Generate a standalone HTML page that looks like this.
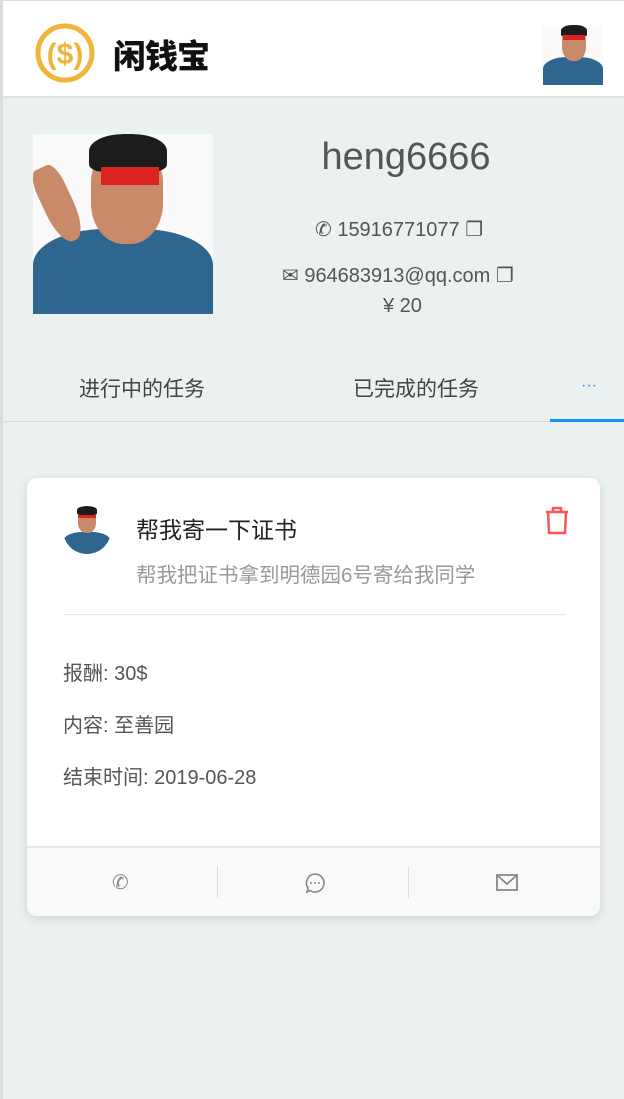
<!DOCTYPE html>
<html><head><meta charset="utf-8"><style>
*{margin:0;padding:0;box-sizing:border-box}
body{width:624px;height:1099px;background:#ebf0f0;font-family:"Liberation Sans","Noto Sans CJK SC",sans-serif;position:relative;overflow:hidden;border-left:3px solid #dcdcdc}
.hdr{position:absolute;left:0;top:0;width:621px;height:98px;background:#fff;border-top:1px solid #ddd;border-bottom:2px solid #e2e2e2}
.av{position:absolute;overflow:hidden;background:#fafafa}
.av .hair{position:absolute;background:#1c1c1c;border-radius:45% 45% 20% 20%}
.av .face{position:absolute;background:#c98a6a;border-radius:30% 30% 45% 45%}
.av .band{position:absolute;background:#d22}
.av .shirt{position:absolute;background:#2f6690;border-radius:40% 40% 0 0}
.t{position:absolute;white-space:nowrap}
</style></head><body>
<div class="hdr">
 <svg style="position:absolute;left:30px;top:20px" width="64" height="64" viewBox="0 0 64 64"><circle cx="32" cy="32" r="27" fill="none" stroke="#f0b43a" stroke-width="5"/><text x="32" y="43" text-anchor="middle" font-family="Liberation Sans" font-weight="bold" font-size="30" fill="#f0b43a">($)</text></svg>
 <div class="t" style="left:110px;top:29px;font-size:33px;font-weight:900;color:#111;font-family:'Noto Sans CJK SC',sans-serif;letter-spacing:-1px">闲钱宝</div>
 <div class="av" style="left:540px;top:24px;width:60px;height:60px">
  <div class="shirt" style="left:0;top:32px;width:60px;height:30px"></div>
  <div class="face" style="left:19px;top:6px;width:24px;height:30px"></div>
  <div class="hair" style="left:18px;top:0;width:26px;height:12px"></div>
  <div class="band" style="left:20px;top:10px;width:22px;height:5px"></div>
 </div>
</div>
<div class="av" style="left:30px;top:134px;width:180px;height:180px">
 <div class="shirt" style="left:0;top:95px;width:180px;height:90px"></div>
 <div class="face" style="left:58px;top:20px;width:72px;height:90px"></div>
 <div class="hair" style="left:56px;top:0;width:78px;height:38px"></div>
 <div class="band" style="left:68px;top:33px;width:58px;height:18px"></div>
 <div class="face" style="left:10px;top:30px;width:30px;height:80px;transform:rotate(-25deg)"></div>
</div>
<div class="t" style="left:0;width:806px;text-align:center;top:136px;font-size:38px;color:#555">heng6666</div>
<div class="t" style="left:312px;top:217px;font-size:20px;color:#555">✆ 15916771077 ❐</div>
<div class="t" style="left:279px;top:263px;font-size:20px;color:#555">✉ 964683913@qq.com ❐</div>
<div class="t" style="left:380px;top:295px;font-size:20px;color:#555">¥ 20</div>
<div style="position:absolute;left:0;top:421px;width:621px;height:1px;background:#d8dcdc"></div>
<div class="t" style="left:76px;top:373px;font-size:21px;color:#444">进行中的任务</div>
<div class="t" style="left:350px;top:373px;font-size:21px;color:#444">已完成的任务</div>
<div class="t" style="left:578px;top:377px;font-size:16px;color:#1890ff">···</div>
<div style="position:absolute;left:547px;top:419px;width:74px;height:3px;background:#1890ff"></div>
<div style="position:absolute;left:24px;top:478px;width:573px;height:438px;background:#fff;border-radius:10px;box-shadow:0 3px 10px rgba(0,0,0,.12);overflow:hidden">
 <div class="av" style="left:36px;top:28px;width:48px;height:48px;border-radius:50%;background:#fff">
  <div class="shirt" style="left:0;top:26px;width:48px;height:24px"></div>
  <div class="face" style="left:15px;top:5px;width:18px;height:22px"></div>
  <div class="hair" style="left:14px;top:0;width:20px;height:9px"></div>
  <div class="band" style="left:15px;top:9px;width:18px;height:3px"></div>
 </div>
 <div class="t" style="left:109px;top:33px;font-size:23px;color:#222">帮我寄一下证书</div>
 <div class="t" style="left:109px;top:80px;font-size:20.5px;color:#999">帮我把证书拿到明德园6号寄给我同学</div>
 <svg style="position:absolute;left:517px;top:28px" width="26" height="30" viewBox="0 0 26 30"><path d="M2 6H24M9 6V2H17V6M4 6L5 27H21L22 6" fill="none" stroke="#f55" stroke-width="2.5" stroke-linejoin="round"/></svg>
 <div style="position:absolute;left:36px;top:136px;width:503px;height:1px;background:#e5e5e5"></div>
 <div class="t" style="left:36px;top:179px;font-size:20px;color:#555">报酬: 30$</div>
 <div class="t" style="left:36px;top:231px;font-size:20px;color:#555">内容: 至善园</div>
 <div class="t" style="left:36px;top:283px;font-size:20px;color:#555">结束时间: 2019-06-28</div>
 <div style="position:absolute;left:0;top:368px;width:573px;height:70px;background:#f9f9f9;border-top:2px solid #e8e8e8"></div>
 <div style="position:absolute;left:190px;top:388px;width:1px;height:32px;background:#ddd"></div>
 <div style="position:absolute;left:381px;top:388px;width:1px;height:32px;background:#ddd"></div>
 <div class="t" style="left:85px;top:392px;font-size:20px;color:#888">✆</div>
 <svg style="position:absolute;left:277px;top:394px" width="22" height="22" viewBox="0 0 22 22"><path d="M11 2a9 9 0 1 1-5 16.5L3 20l1-4A9 9 0 0 1 11 2z" fill="none" stroke="#888" stroke-width="1.6"/><circle cx="7" cy="11" r="1" fill="#888"/><circle cx="11" cy="11" r="1" fill="#888"/><circle cx="15" cy="11" r="1" fill="#888"/></svg>
 <svg style="position:absolute;left:469px;top:396px" width="22" height="18" viewBox="0 0 22 18"><rect x="1" y="1" width="20" height="15" fill="none" stroke="#888" stroke-width="1.8"/><path d="M1 1L11 10L21 1" fill="none" stroke="#888" stroke-width="1.8"/></svg>
</div>
</body></html>
